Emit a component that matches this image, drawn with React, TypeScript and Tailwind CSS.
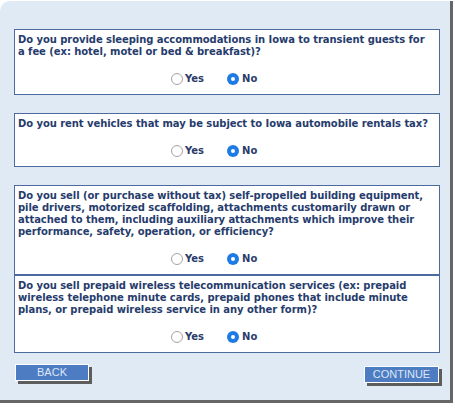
import React from "react";

function Radio({ checked }: { checked: boolean }) {
  if (checked) {
    return (
      <span className="flex h-[12px] w-[12px] items-center justify-center rounded-full bg-[#1e7be6]">
        <span className="h-[4px] w-[4px] rounded-full bg-white" />
      </span>
    );
  }
  return <span className="block h-[12px] w-[12px] rounded-full border border-[#a3a3a3] bg-white" />;
}

function Question({ lines, className = "" }: { lines: string[]; className?: string }) {
  return (
    <div className={`border border-[#4d6a9f] bg-white px-[3px] pt-[4px] pb-[8px] ${className}`}>
      <div className="text-[10px] font-bold leading-[12px] tracking-[-0.06px] text-[#263c6c]">
        {lines.map((l, i) => (
          <div key={i} className="whitespace-nowrap">
            {l}
          </div>
        ))}
      </div>
      <div className="mt-[14px] flex h-[14px] items-center pl-[153px] text-[10px] font-bold leading-[12px] text-[#2b3c6b]">
        <Radio checked={false} />
        <span className="ml-[2px]">Yes</span>
        <span className="ml-[23px]">
          <Radio checked={true} />
        </span>
        <span className="ml-[3px]">No</span>
      </div>
    </div>
  );
}

export default function App() {
  return (
    <div className="h-[415px] w-[455px] bg-white" style={{ fontFamily: '"DejaVu Sans", Verdana, sans-serif' }}>
      <div className="mt-[1px] h-[402px] w-[453px] rounded-tl-[10px] border-r-[3px] border-b-[3px] border-[#666666] bg-[#dfeaf5] pt-[28px] pl-[14px] pr-[10px]">
        <div className="flex flex-col">
          <Question
            lines={[
              "Do you provide sleeping accommodations in Iowa to transient guests for",
              "a fee (ex: hotel, motel or bed & breakfast)?",
            ]}
          />
          <Question
            className="mt-[18px]"
            lines={["Do you rent vehicles that may be subject to Iowa automobile rentals tax?"]}
          />
          <Question
            className="mt-[18px]"
            lines={[
              "Do you sell (or purchase without tax) self-propelled building equipment,",
              "pile drivers, motorized scaffolding, attachments customarily drawn or",
              "attached to them, including auxiliary attachments which improve their",
              "performance, safety, operation, or efficiency?",
            ]}
          />
          <Question
            lines={[
              "Do you sell prepaid wireless telecommunication services (ex: prepaid",
              "wireless telephone minute cards, prepaid phones that include minute",
              "plans, or prepaid wireless service in any other form)?",
            ]}
          />
        </div>
        <div
          className="mt-[11px] flex items-start justify-between pl-[1px] pr-[1px]"
          style={{ fontFamily: '"Liberation Sans", Arial, sans-serif' }}
        >
          <button className="flex h-[17px] w-[74px] items-center justify-center border border-white bg-[#4d7cc3] text-[11px] leading-none text-[#dde7f5] shadow-[3px_3px_0_#5d5d5d]">
            BACK
          </button>
          <button className="mt-[2px] flex h-[17px] w-[75px] items-center justify-center border border-white bg-[#4d7cc3] text-[11px] leading-none text-[#dde7f5] shadow-[3px_3px_0_#5d5d5d]">
            CONTINUE
          </button>
        </div>
      </div>
    </div>
  );
}
